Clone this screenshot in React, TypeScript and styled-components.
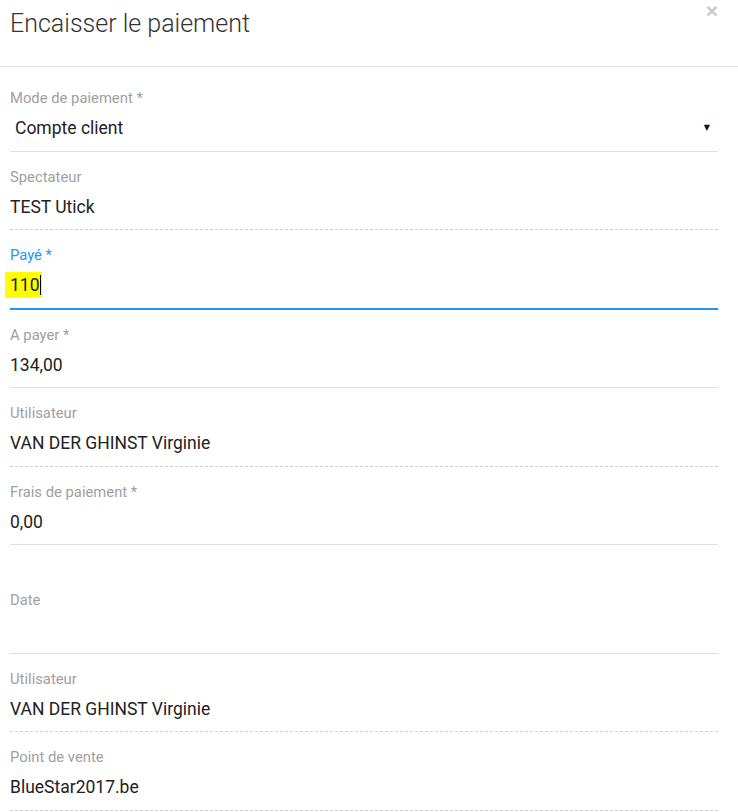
import React from "react";
import styled, { createGlobalStyle } from "styled-components";

const Global = createGlobalStyle`
  html, body { margin: 0; padding: 0; background: #fff; }
  body { font-family: Roboto, "Noto Sans", Arial, sans-serif; color: #333; }
  * { box-sizing: border-box; }
`;

const Modal = styled.div`
  width: 738px;
  background: #fff;
`;

const Header = styled.div`
  display: flex;
  justify-content: space-between;
  align-items: flex-start;
  height: 67px;
  padding: 6px 20px 0 10px;
  border-bottom: 1px solid #e5e5e5;
`;

const Title = styled.h1`
  margin: 0;
  font-size: 25px;
  line-height: 36px;
  font-weight: 300;
  color: #333;
`;

const Close = styled.button`
  border: 0;
  background: none;
  padding: 0;
  margin-top: -3px;
  font-family: "Liberation Sans", Arial, sans-serif;
  font-size: 21px;
  font-weight: 700;
  line-height: 16px;
  color: #c8c8c8;
  cursor: pointer;
`;

const Body = styled.div`
  display: flex;
  flex-direction: column;
  padding: 6px 20px 0 10px;
`;

type FieldProps = { $border: "solid" | "dashed" | "focus"; $spaced?: boolean };

const Field = styled.div<FieldProps>`
  display: flex;
  flex-direction: column;
  padding: ${(p) => (p.$spaced ? "45px" : "15px")} 0 10.5px;
  border-bottom: ${(p) =>
    p.$border === "focus"
      ? "2px solid #2196f3"
      : p.$border === "dashed"
      ? "1px dashed #d0d0d0"
      : "1px solid #e0e0e0"};
`;

const Label = styled.label<{ $focus?: boolean }>`
  font-size: 14.8px;
  line-height: 20px;
  color: ${(p) => (p.$focus ? "#2196f3" : "#a0a0a0")};
  margin-bottom: 8px;
`;

const Value = styled.div<{ $indent?: boolean }>`
  display: flex;
  align-items: center;
  justify-content: space-between;
  font-size: 17.5px;
  line-height: 24px;
  height: 24px;
  color: #222;
  padding-left: ${(p) => (p.$indent ? "5px" : "0")};
`;

const Arrow = styled.span`
  font-family: "DejaVu Sans", sans-serif;
  font-size: 8px;
  color: #111;
  margin-right: 8px;
`;

const Highlight = styled.span`
  display: inline-block;
  background: #ffff00;
  margin-left: -5px;
  padding: 1px 1px 1px 5px;
  line-height: 24px;
`;

const Caret = styled.span`
  display: inline-block;
  width: 1px;
  height: 20px;
  background: #000;
  vertical-align: -4px;
`;

export default function App() {
  return (
    <>
      <Global />
      <Modal>
        <Header>
          <Title>Encaisser le paiement</Title>
          <Close aria-label="Fermer">×</Close>
        </Header>
        <Body>
          <Field $border="solid">
            <Label>Mode de paiement *</Label>
            <Value $indent>
              <span>Compte client</span>
              <Arrow>▼</Arrow>
            </Value>
          </Field>
          <Field $border="dashed">
            <Label>Spectateur</Label>
            <Value>TEST Utick</Value>
          </Field>
          <Field $border="focus">
            <Label $focus>Payé *</Label>
            <Value>
              <Highlight>
                110<Caret />
              </Highlight>
            </Value>
          </Field>
          <Field $border="solid">
            <Label>A payer *</Label>
            <Value>134,00</Value>
          </Field>
          <Field $border="dashed">
            <Label>Utilisateur</Label>
            <Value>VAN DER GHINST Virginie</Value>
          </Field>
          <Field $border="solid">
            <Label>Frais de paiement *</Label>
            <Value>0,00</Value>
          </Field>
          <Field $border="solid" $spaced>
            <Label>Date</Label>
            <Value />
          </Field>
          <Field $border="dashed">
            <Label>Utilisateur</Label>
            <Value>VAN DER GHINST Virginie</Value>
          </Field>
          <Field $border="dashed">
            <Label>Point de vente</Label>
            <Value>BlueStar2017.be</Value>
          </Field>
        </Body>
      </Modal>
    </>
  );
}
